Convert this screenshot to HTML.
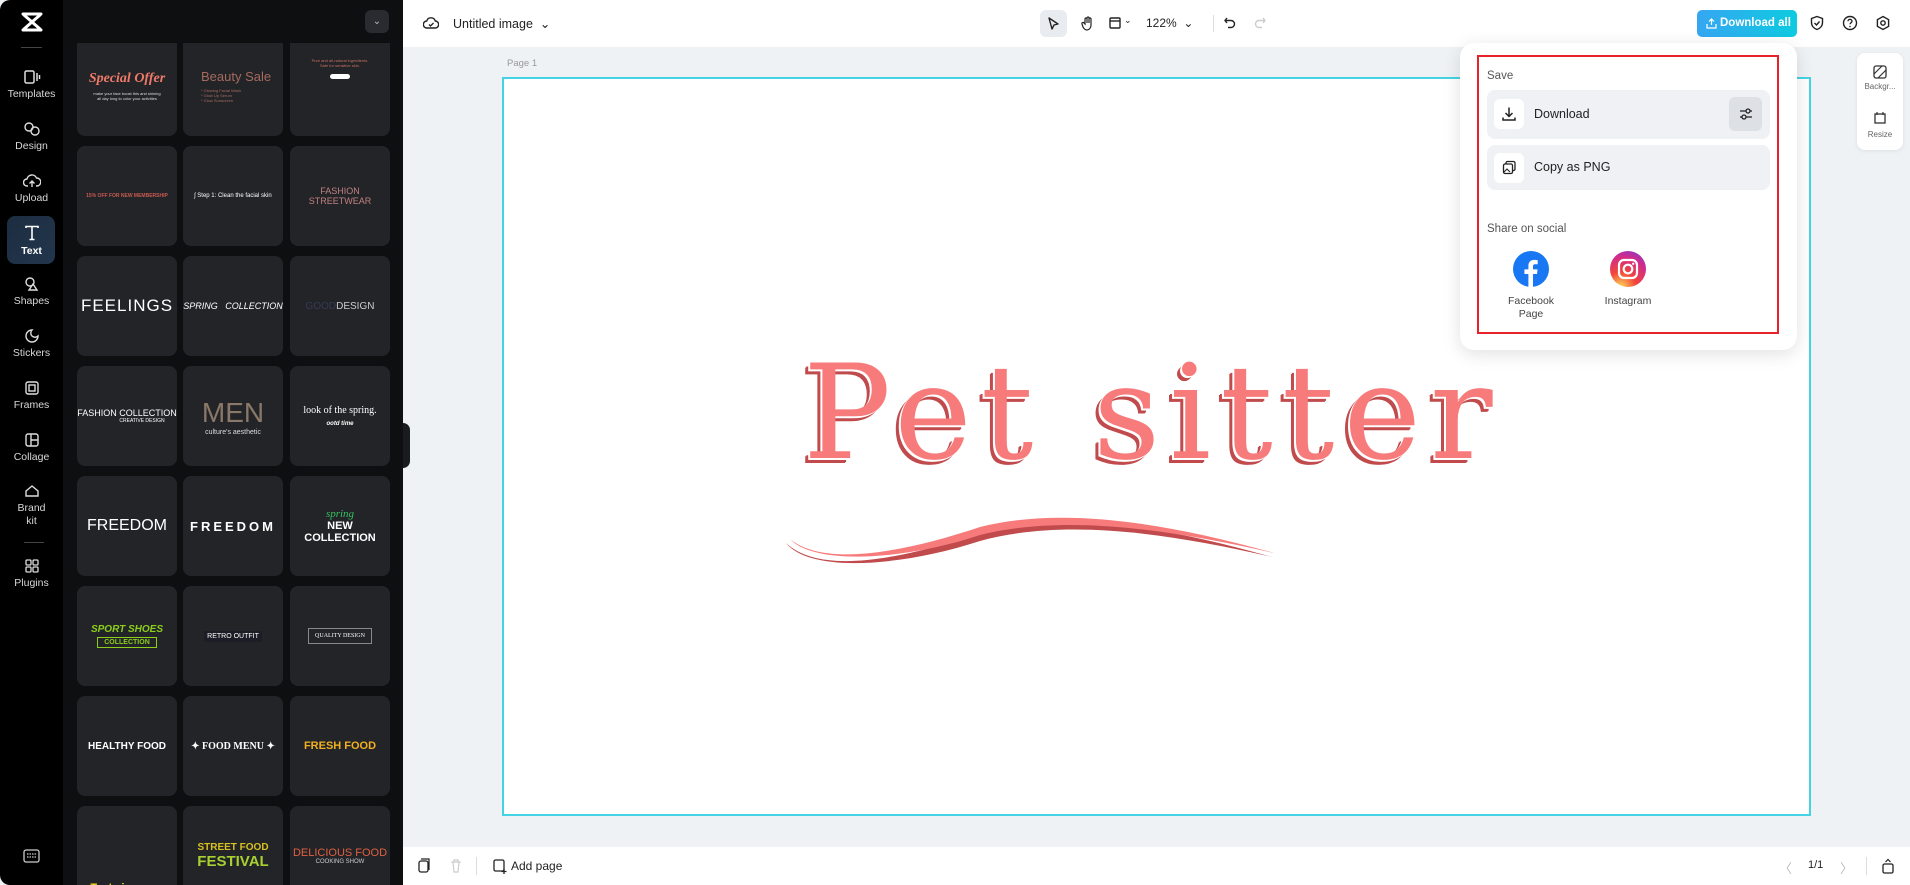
<!DOCTYPE html>
<html><head><meta charset="utf-8">
<style>
*{box-sizing:border-box;margin:0;padding:0}
body{width:1910px;height:885px;overflow:hidden;background:#eff2f5;font-family:"Liberation Sans",sans-serif;position:relative}
.abs{position:absolute}
#nav{left:0;top:0;width:63px;height:885px;background:#000;border-radius:10px 0 0 10px}
.ni{position:absolute;left:0;width:63px;text-align:center;color:#d8d8d8;font-size:10.5px}
.ni svg{display:block;margin:0 auto 3px}
#panel{left:63px;top:0;width:340px;height:885px;background:#0e0f11}
.card{position:absolute;width:100px;height:100px;background:#232428;border-radius:8px;overflow:hidden;display:flex;flex-direction:column;align-items:center;justify-content:center;text-align:center;color:#fff}
#top{left:403px;top:0;width:1507px;height:47px;background:#fff}
#bottom{left:403px;top:847px;width:1507px;height:38px;background:#fff}
.t{position:absolute;font-size:12px;color:#222}
</style></head><body>

<div id="nav" class="abs">
  <svg class="abs" style="left:21px;top:12px" width="22" height="20" viewBox="0 0 22 20"><path d="M2 2h18M2 18h18M3 3l16 14M19 3L3 17" stroke="#fff" stroke-width="3" fill="none" stroke-linecap="round"/></svg>
  <div class="abs" style="left:21px;top:47px;width:21px;height:1px;background:#444"></div>
  <div class="ni" style="top:69px"><svg width="18" height="16" viewBox="0 0 18 16"><rect x="2" y="2" width="9" height="12" rx="1.5" stroke="#ddd" stroke-width="1.5" fill="none"/><path d="M14 4v8M16.5 6v4" stroke="#ddd" stroke-width="1.5"/></svg>Templates</div>
  <div class="ni" style="top:121px"><svg width="18" height="16" viewBox="0 0 18 16"><circle cx="6" cy="6" r="4" stroke="#ddd" stroke-width="1.4" fill="none"/><circle cx="12" cy="10" r="4" stroke="#ddd" stroke-width="1.4" fill="none"/></svg>Design</div>
  <div class="ni" style="top:173px"><svg width="18" height="16" viewBox="0 0 18 16"><path d="M5 13H4a3.5 3.5 0 010-7 5 5 0 019.5-1A3.5 3.5 0 0114 13h-1M9 14V8M6.5 10.5L9 8l2.5 2.5" stroke="#ddd" stroke-width="1.4" fill="none"/></svg>Upload</div>
  <div class="abs" style="left:7px;top:216px;width:48px;height:48px;border-radius:8px;background:linear-gradient(135deg,#1d2d40,#22364d)"></div>
  <div class="ni" style="top:224px;color:#fff;font-weight:bold"><svg width="18" height="18" viewBox="0 0 18 18"><path d="M3 4V2.5h12V4M9 2.5v13M6.5 15.5h5" stroke="#fff" stroke-width="1.6" fill="none"/></svg>Text</div>
  <div class="ni" style="top:276px"><svg width="18" height="16" viewBox="0 0 18 16"><circle cx="7" cy="6" r="4" stroke="#ddd" stroke-width="1.4" fill="none"/><path d="M10 8l4 6H6z" stroke="#ddd" stroke-width="1.4" fill="none"/></svg>Shapes</div>
  <div class="ni" style="top:328px"><svg width="18" height="16" viewBox="0 0 18 16"><path d="M9 2a6 6 0 106 6 4 4 0 01-6-6z" stroke="#ddd" stroke-width="1.4" fill="none"/></svg>Stickers</div>
  <div class="ni" style="top:380px"><svg width="18" height="16" viewBox="0 0 18 16"><rect x="3" y="2" width="12" height="12" rx="2" stroke="#ddd" stroke-width="1.4" fill="none"/><rect x="6" y="5" width="6" height="6" stroke="#ddd" stroke-width="1.4" fill="none"/></svg>Frames</div>
  <div class="ni" style="top:432px"><svg width="18" height="16" viewBox="0 0 18 16"><rect x="3" y="2" width="12" height="12" rx="2" stroke="#ddd" stroke-width="1.4" fill="none"/><path d="M8 2v12M8 8h7" stroke="#ddd" stroke-width="1.4"/></svg>Collage</div>
  <div class="ni" style="top:483px;line-height:13px"><svg width="18" height="16" viewBox="0 0 18 16"><path d="M3 8l6-5 6 5v5H3z" stroke="#ddd" stroke-width="1.4" fill="none"/></svg>Brand<br>kit</div>
  <div class="abs" style="left:24px;top:542px;width:20px;height:1px;background:#444"></div>
  <div class="ni" style="top:558px"><svg width="18" height="16" viewBox="0 0 18 16"><rect x="3" y="2" width="5" height="5" rx="1" stroke="#ddd" stroke-width="1.3" fill="none"/><rect x="10" y="2" width="5" height="5" rx="1" stroke="#ddd" stroke-width="1.3" fill="none"/><rect x="3" y="9" width="5" height="5" rx="1" stroke="#ddd" stroke-width="1.3" fill="none"/><rect x="10" y="9" width="5" height="5" rx="1" stroke="#ddd" stroke-width="1.3" fill="none"/></svg>Plugins</div>
  <svg class="abs" style="left:23px;top:849px" width="17" height="14" viewBox="0 0 17 14"><rect x="1" y="1" width="15" height="12" rx="2" stroke="#ccc" stroke-width="1.3" fill="none"/><path d="M4 5h9M4 8h9" stroke="#ccc" stroke-width="1.2" stroke-dasharray="1.5 1"/></svg>
</div>

<div id="panel" class="abs">
  <div class="abs" style="left:302px;top:10px;width:24px;height:23px;background:#2a2b30;border-radius:6px;color:#bbb;font-size:10px;text-align:center;line-height:23px">⌄</div>
  <div class="abs" style="left:0;top:43px;width:340px;height:842px;overflow:hidden">
    <div class="card" style="left:14px;top:-7px"><div style="color:#f07a6a;font-style:italic;font-weight:bold;font-size:14px;font-family:'Liberation Serif',serif">Special Offer</div><div style="font-size:4px;color:#ddd;margin-top:4px">make your face boost this and shining<br>all day long to color your activities</div></div>
    <div class="card" style="left:120px;top:-7px;align-items:flex-start;padding-left:18px"><div style="color:#a56a5e;font-size:13px">Beauty Sale</div><div style="font-size:4px;color:#a56a5e;text-align:left;margin-top:4px">* Glowing Facial Wash<br>* Glow Up Serum<br>* Glow Sunscreen</div></div>
    <div class="card" style="left:227px;top:-7px;justify-content:flex-start;padding-top:22px"><div style="font-size:4px;color:#c87060">Pure and all-natural ingredients.<br>Safe for sensitive skin.</div><div style="width:20px;height:5px;background:#fff;border-radius:3px;margin-top:6px"></div></div>
    <div class="card" style="left:14px;top:103px"><div style="font-size:5px;color:#c85a50;font-weight:bold">15% OFF FOR NEW MEMBERSHIP</div></div>
    <div class="card" style="left:120px;top:103px"><div style="font-size:6px;color:#fff">ʃ Step 1: Clean the facial skin</div></div>
    <div class="card" style="left:227px;top:103px"><div style="font-size:9px;color:#c08080">FASHION STREETWEAR</div></div>
    <div class="card" style="left:14px;top:213px"><div style="font-size:17px;font-family:'Liberation Sans Narrow',sans-serif;letter-spacing:1px">FEELINGS</div></div>
    <div class="card" style="left:120px;top:213px"><div style="font-size:9px;font-style:italic">SPRING &nbsp; COLLECTION</div></div>
    <div class="card" style="left:227px;top:213px"><div style="font-size:10px;color:#ccc"><span style="color:#333a55">GOOD</span>DESIGN</div></div>
    <div class="card" style="left:14px;top:323px"><div style="font-size:9px">FASHION COLLECTION</div><div style="font-size:5px;margin-left:30px">CREATIVE DESIGN</div></div>
    <div class="card" style="left:120px;top:323px"><div style="font-size:28px;color:#8a7868;font-weight:300">MEN</div><div style="font-size:7px;color:#ddd">culture's aesthetic</div></div>
    <div class="card" style="left:227px;top:323px"><div style="font-size:10px;font-family:'Liberation Serif',serif">look of the spring.</div><div style="font-size:6px;font-style:italic;font-weight:bold;margin-top:5px">ootd time</div></div>
    <div class="card" style="left:14px;top:433px"><div style="font-size:16px;font-family:'Liberation Sans Narrow',sans-serif">FREEDOM</div></div>
    <div class="card" style="left:120px;top:433px"><div style="font-size:13px;font-weight:bold;letter-spacing:3px">FREEDOM</div></div>
    <div class="card" style="left:227px;top:433px"><div style="font-size:11px;color:#36c060;font-style:italic;font-family:'Liberation Serif',serif">spring</div><div style="font-size:11px;font-weight:bold;font-family:'Liberation Sans Narrow',sans-serif">NEW COLLECTION</div></div>
    <div class="card" style="left:14px;top:543px"><div style="font-size:10px;color:#8ccf1a;font-style:italic;font-weight:bold">SPORT SHOES</div><div style="font-size:7px;color:#8ccf1a;border:1px solid #8ccf1a;padding:1px 6px;margin-top:2px;font-weight:bold">COLLECTION</div></div>
    <div class="card" style="left:120px;top:543px"><div style="font-size:7px;background:#1c1d26;padding:2px 3px">RETRO OUTFIT</div></div>
    <div class="card" style="left:227px;top:543px"><div style="font-size:6px;border:1px solid #888;padding:4px 6px;font-family:'Liberation Serif',serif">QUALITY DESIGN</div></div>
    <div class="card" style="left:14px;top:653px"><div style="font-size:10px;font-weight:bold">HEALTHY FOOD</div></div>
    <div class="card" style="left:120px;top:653px"><div style="font-size:10px;font-weight:bold;font-family:'Liberation Serif',serif">✦ FOOD MENU ✦</div></div>
    <div class="card" style="left:227px;top:653px"><div style="font-size:11px;font-weight:bold;color:#f0b020">FRESH FOOD</div></div>
    <div class="card" style="left:14px;top:763px;justify-content:flex-end;padding-bottom:0"><div style="font-size:11px;font-weight:bold;color:#f8e020">Taste is super spicy</div></div>
    <div class="card" style="left:120px;top:763px"><div style="font-size:10px;font-weight:bold;color:#d8c020">STREET FOOD</div><div style="font-size:15px;font-weight:bold;color:#a8d030">FESTIVAL</div></div>
    <div class="card" style="left:227px;top:763px"><div style="font-size:11px;color:#e06040">DELICIOUS FOOD</div><div style="font-size:6px;color:#ccc">COOKING SHOW</div></div>
  </div>
</div>
<div class="abs" style="left:403px;top:423px;width:7px;height:45px;background:#1a1b1e;border-radius:0 8px 8px 0"></div>

<div id="top" class="abs">
  <svg class="abs" style="left:20px;top:15px" width="16" height="16" viewBox="0 0 16 16"><path d="M4.5 13H4a3.5 3.5 0 01-.3-7 4.5 4.5 0 018.6 0A3.5 3.5 0 0112 13z" stroke="#222" stroke-width="1.4" fill="none"/><path d="M6 9.5l1.5 1.5 3-3" stroke="#222" stroke-width="1.3" fill="none"/></svg>
  <div class="t" style="left:50px;top:16px;font-size:12.5px">Untitled image &nbsp;⌄</div>
  <div class="abs" style="left:637px;top:10px;width:27px;height:27px;background:#e8ebef;border-radius:6px"></div>
  <svg class="abs" style="left:643px;top:16px" width="15" height="15" viewBox="0 0 15 15"><path d="M3 2l9 6-4 1-2 4z" stroke="#222" stroke-width="1.4" fill="none" stroke-linejoin="round"/></svg>
  <svg class="abs" style="left:677px;top:15px" width="16" height="16" viewBox="0 0 16 16"><path d="M5 9V4a1 1 0 012 0v4V3a1 1 0 012 0v5V4a1 1 0 012 0v6c0 3-2 5-4 5s-3-1-4-3L2 9a1 1 0 012-1z" stroke="#222" stroke-width="1.2" fill="none"/></svg>
  <svg class="abs" style="left:705px;top:16px" width="14" height="14" viewBox="0 0 14 14"><rect x="2" y="2" width="10" height="10" rx="1" stroke="#222" stroke-width="1.4" fill="none"/><path d="M2 5h10" stroke="#222" stroke-width="1.4"/></svg>
  <div class="t" style="left:721px;top:15px;font-size:9px">⌄</div>
  <div class="t" style="left:743px;top:16px;font-size:12px">122% &nbsp;⌄</div>
  <div class="abs" style="left:810px;top:15px;width:1px;height:17px;background:#ddd"></div>
  <svg class="abs" style="left:820px;top:16px" width="14" height="14" viewBox="0 0 14 14"><path d="M4 2L2 4.5 4 7M2 4.5h6a3.5 3.5 0 010 7H5" stroke="#222" stroke-width="1.4" fill="none"/></svg>
  <svg class="abs" style="left:850px;top:16px" width="14" height="14" viewBox="0 0 14 14"><path d="M10 2l2 2.5L10 7M12 4.5H6a3.5 3.5 0 000 7h3" stroke="#ccc" stroke-width="1.4" fill="none"/></svg>
  <div class="abs" style="left:1294px;top:10px;width:100px;height:27px;border-radius:5px;background:linear-gradient(90deg,#36a6f2,#0dcbe0);color:#fff;font-size:11.5px;font-weight:bold;line-height:27px;padding-left:23px;white-space:nowrap">Download all</div>
  <svg class="abs" style="left:1302px;top:17px" width="13" height="13" viewBox="0 0 13 13"><path d="M6.5 8V2M4 4.5l2.5-2.5L9 4.5M2 7v4h9V7" stroke="#fff" stroke-width="1.2" fill="none"/></svg>
  <svg class="abs" style="left:1406px;top:15px" width="16" height="16" viewBox="0 0 16 16"><path d="M8 1.5l5.5 2v4c0 3.5-2.5 6-5.5 7-3-1-5.5-3.5-5.5-7v-4z" stroke="#222" stroke-width="1.4" fill="none"/><path d="M5.5 8l2 2 3-3.5" stroke="#222" stroke-width="1.4" fill="none"/></svg>
  <svg class="abs" style="left:1439px;top:15px" width="16" height="16" viewBox="0 0 16 16"><circle cx="8" cy="8" r="6.5" stroke="#222" stroke-width="1.4" fill="none"/><path d="M6 6.3a2 2 0 114 0c0 1.3-2 1.5-2 3" stroke="#222" stroke-width="1.3" fill="none"/><circle cx="8" cy="11.5" r=".8" fill="#222"/></svg>
  <svg class="abs" style="left:1472px;top:15px" width="16" height="16" viewBox="0 0 16 16"><path d="M8 1.5l5.6 3.2v6.6L8 14.5l-5.6-3.2V4.7z" stroke="#222" stroke-width="1.4" fill="none"/><circle cx="8" cy="8" r="2.2" stroke="#222" stroke-width="1.4" fill="none"/></svg>
</div>

<div class="abs" style="left:507px;top:58px;font-size:9.5px;color:#999">Page 1</div>
<div class="abs" style="left:502px;top:77px;width:1309px;height:739px;background:#fff;border:2px solid #44d3e4"></div>

<div class="abs" style="left:803px;top:347px;font-family:'DejaVu Serif',serif;font-size:131px;line-height:131px;color:#f87b7b;letter-spacing:9px;text-shadow:-1px 1px 0 #fff,-2px 2px 0 #fff,-4px 4px 0 #c04a4c,-5px 5px 0 #c04a4c;white-space:nowrap">Pet sitter</div>
<svg class="abs" style="left:780px;top:505px" width="510" height="70" viewBox="0 0 510 70">
  <path d="M6 38 C40 70 120 55 200 28 C280 5 380 20 492 52 C380 26 280 14 200 36 C120 62 30 68 6 38Z" fill="#c04a4c"/>
  <path d="M10 34 C44 62 122 48 200 22 C280 2 380 16 494 48 C380 22 280 10 200 30 C122 56 34 60 10 34Z" fill="#f87b7b"/>
</svg>

<div class="abs" style="left:1857px;top:53px;width:46px;height:97px;background:#fff;border-radius:8px;box-shadow:0 1px 4px rgba(0,0,0,.08)">
  <svg class="abs" style="left:16px;top:12px" width="14" height="14" viewBox="0 0 14 14"><rect x="1" y="1" width="12" height="12" rx="2" stroke="#333" stroke-width="1.3" fill="none"/><path d="M1 9L9 1M5 13L13 5" stroke="#333" stroke-width="1.2"/></svg>
  <div class="abs" style="left:0;top:29px;width:46px;text-align:center;font-size:8px;color:#666">Backgr...</div>
  <svg class="abs" style="left:16px;top:58px" width="14" height="14" viewBox="0 0 14 14"><rect x="2" y="3" width="10" height="9" stroke="#333" stroke-width="1.3" fill="none"/><path d="M4 1v3M10 1v3" stroke="#333" stroke-width="1.2"/></svg>
  <div class="abs" style="left:0;top:77px;width:46px;text-align:center;font-size:8px;color:#666">Resize</div>
</div>

<div class="abs" style="left:1460px;top:43px;width:337px;height:307px;background:#fff;border-radius:14px;box-shadow:0 4px 18px rgba(0,0,0,.12)"></div>
<div class="abs" style="left:1477px;top:55px;width:302px;height:279px;border:2px solid #e8222b"></div>
<div class="abs" style="left:1487px;top:70px;font-size:11.5px;color:#555">Save</div>
<div class="abs" style="left:1487px;top:90px;width:283px;height:49px;background:#eff1f4;border-radius:8px">
  <div class="abs" style="left:7px;top:9px;width:30px;height:30px;background:#fff;border-radius:6px"></div>
  <svg class="abs" style="left:14px;top:16px" width="16" height="16" viewBox="0 0 16 16"><path d="M8 1.5v9M4.5 7L8 10.5 11.5 7M2 11.5v2.5h12v-2.5" stroke="#222" stroke-width="1.5" fill="none"/></svg>
  <div class="abs" style="left:47px;top:17px;font-size:12.5px;color:#222">Download</div>
  <div class="abs" style="left:242px;top:7px;width:33px;height:34px;background:#dde1e6;border-radius:6px"></div>
  <svg class="abs" style="left:251px;top:16px" width="16" height="16" viewBox="0 0 16 16"><path d="M2 5h12M2 11h12" stroke="#222" stroke-width="1.3"/><circle cx="10" cy="5" r="2" fill="#dde1e6" stroke="#222" stroke-width="1.3"/><circle cx="6" cy="11" r="2" fill="#dde1e6" stroke="#222" stroke-width="1.3"/></svg>
</div>
<div class="abs" style="left:1487px;top:145px;width:283px;height:45px;background:#eff1f4;border-radius:8px">
  <div class="abs" style="left:7px;top:8px;width:30px;height:30px;background:#fff;border-radius:6px"></div>
  <svg class="abs" style="left:15px;top:15px" width="15" height="15" viewBox="0 0 15 15"><rect x="4" y="1.5" width="9" height="9" rx="1.5" stroke="#222" stroke-width="1.3" fill="none"/><rect x="1.5" y="4" width="9" height="9.5" rx="1.5" stroke="#222" stroke-width="1.3" fill="#fff"/><path d="M2 12l3-3 3 3" stroke="#222" stroke-width="1.1" fill="none"/></svg>
  <div class="abs" style="left:47px;top:15px;font-size:12.5px;color:#222">Copy as PNG</div>
</div>
<div class="abs" style="left:1487px;top:223px;font-size:11.5px;color:#555">Share on social</div>
<svg class="abs" style="left:1513px;top:251px" width="36" height="36" viewBox="0 0 36 36"><circle cx="18" cy="18" r="18" fill="#1877f2"/><path d="M20 36V23h4l.6-4.6H20v-3c0-1.3.4-2.2 2.3-2.2h2.4V9.1c-.4 0-1.8-.2-3.5-.2-3.5 0-5.8 2.1-5.8 6v3.5h-4V23h4v13z" fill="#fff"/></svg>
<div class="abs" style="left:1491px;top:295px;width:80px;text-align:center;font-size:10.5px;color:#444;line-height:13px">Facebook<br>Page</div>
<svg class="abs" style="left:1610px;top:251px" width="36" height="36" viewBox="0 0 36 36"><defs><radialGradient id="ig" cx="0.3" cy="1" r="1.2"><stop offset="0" stop-color="#fdd65a"/><stop offset=".35" stop-color="#f3453a"/><stop offset=".7" stop-color="#d22b8a"/><stop offset="1" stop-color="#7a3ad8"/></radialGradient></defs><circle cx="18" cy="18" r="18" fill="url(#ig)"/><rect x="9" y="9" width="18" height="18" rx="5" stroke="#fff" stroke-width="2.2" fill="none"/><circle cx="18" cy="18" r="4.3" stroke="#fff" stroke-width="2.2" fill="none"/><circle cx="23.2" cy="12.8" r="1.2" fill="#fff"/></svg>
<div class="abs" style="left:1588px;top:295px;width:80px;text-align:center;font-size:10.5px;color:#444">Instagram</div>

<div id="bottom" class="abs">
  <svg class="abs" style="left:14px;top:11px" width="14" height="16" viewBox="0 0 14 16"><rect x="2" y="3" width="9" height="11" rx="2" stroke="#222" stroke-width="1.3" fill="none"/><path d="M4 1h8v11" stroke="#222" stroke-width="1.2" fill="none"/></svg>
  <svg class="abs" style="left:46px;top:11px" width="14" height="16" viewBox="0 0 14 16"><path d="M2 4h10M4 4l1 10h4l1-10M5 4V2h4v2" stroke="#ccc" stroke-width="1.2" fill="none"/></svg>
  <div class="abs" style="left:73px;top:10px;width:1px;height:18px;background:#ddd"></div>
  <svg class="abs" style="left:89px;top:11px" width="16" height="16" viewBox="0 0 16 16"><rect x="2" y="2" width="10" height="11" rx="1.5" stroke="#222" stroke-width="1.3" fill="none"/><path d="M12 11v5M9.5 13.5h5" stroke="#222" stroke-width="1.3"/></svg>
  <div class="t" style="left:108px;top:12px;font-size:12px">Add page</div>
  <div class="t" style="left:1376px;top:11px;font-size:13px;color:#bbb">〈</div>
  <div class="t" style="left:1405px;top:12px;font-size:11px">1/1</div>
  <div class="t" style="left:1437px;top:11px;font-size:13px;color:#bbb">〉</div>
  <div class="abs" style="left:1463px;top:10px;width:1px;height:18px;background:#ddd"></div>
  <svg class="abs" style="left:1478px;top:11px" width="14" height="16" viewBox="0 0 14 16"><rect x="2" y="6" width="10" height="9" rx="1.5" stroke="#222" stroke-width="1.3" fill="none"/><path d="M4.5 4L7 1.5 9.5 4" stroke="#222" stroke-width="1.2" fill="none"/></svg>
</div>
</body></html>
